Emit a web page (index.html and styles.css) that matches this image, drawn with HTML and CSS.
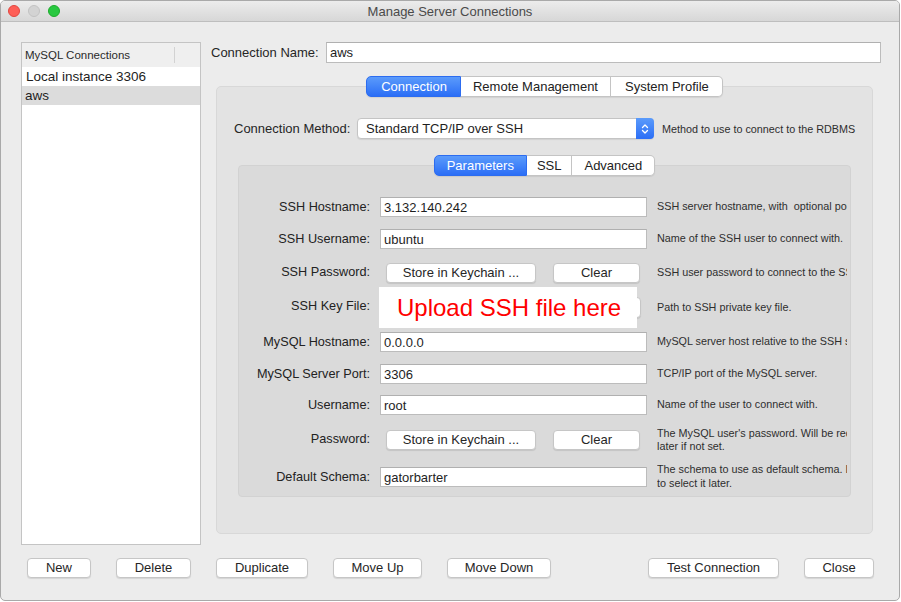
FILE: index.html
```html
<!DOCTYPE html>
<html>
<head>
<meta charset="utf-8">
<title>Manage Server Connections</title>
<link rel="stylesheet" href="styles.css">
</head>
<body>
<div class="window">
  <div class="titlebar">
    <div class="lights">
      <span class="light red"></span><span class="light gray"></span><span class="light green"></span>
    </div>
    <div class="title">Manage Server Connections</div>
    <div></div>
  </div>
  <div class="content">
    <div class="main">
      <div class="list">
        <div class="list-header"><span class="list-header-text">MySQL Connections</span><span class="hdr-sep"></span></div>
        <div class="list-row">Local instance 3306</div>
        <div class="list-row selected">aws</div>
      </div>
      <div class="editor">
        <div class="name-row">
          <span class="name-label">Connection Name:</span>
          <div class="input name-input">aws</div>
        </div>
        <div class="tabview outer">
          <div class="tabs">
            <span class="tab active">Connection</span><span class="tab">Remote Management</span><span class="tab last-wide">System Profile</span>
          </div>
          <div class="panel">
            <div class="method-row">
              <span class="method-label">Connection Method:</span>
              <div class="select">
                <span class="select-text">Standard TCP/IP over SSH</span>
                <span class="select-arrow"><svg width="8" height="12" viewBox="0 0 8 12"><path d="M1.5 4.5 L4 2 L6.5 4.5 M1.5 7.5 L4 10 L6.5 7.5" fill="none" stroke="#fff" stroke-width="1.3" stroke-linecap="round" stroke-linejoin="round"/></svg></span>
              </div>
              <span class="method-desc">Method to use to connect to the RDBMS</span>
            </div>
            <div class="tabview inner">
              <div class="tabs">
                <span class="tab active">Parameters</span><span class="tab narrow">SSL</span><span class="tab">Advanced</span>
              </div>
              <div class="inner-panel">
                <div class="form">
                  <span class="flabel">SSH Hostname:</span>
                  <div class="input field-input">3.132.140.242</div>
                  <span class="desc">SSH server hostname, with &nbsp;optional port (if not 22)</span>

                  <span class="flabel">SSH Username:</span>
                  <div class="input field-input">ubuntu</div>
                  <span class="desc">Name of the SSH user to connect with.</span>

                  <span class="flabel btn-row-label">SSH Password:</span>
                  <div class="field-buttons"><button class="btn keychain">Store in Keychain ...</button><button class="btn clear">Clear</button></div>
                  <span class="desc">SSH user password to connect to the SSH tunnel.</span>

                  <span class="flabel btn-row-label">SSH Key File:</span>
                  <div class="keyfile">
                    <button class="btn browse"></button>
                    <div class="upload-note">Upload SSH file here</div>
                  </div>
                  <span class="desc">Path to SSH private key file.</span>

                  <span class="flabel">MySQL Hostname:</span>
                  <div class="input field-input">0.0.0.0</div>
                  <span class="desc">MySQL server host relative to the SSH server.</span>

                  <span class="flabel">MySQL Server Port:</span>
                  <div class="input field-input">3306</div>
                  <span class="desc">TCP/IP port of the MySQL server.</span>

                  <span class="flabel">Username:</span>
                  <div class="input field-input">root</div>
                  <span class="desc">Name of the user to connect with.</span>

                  <span class="flabel btn-row-label">Password:</span>
                  <div class="field-buttons"><button class="btn keychain">Store in Keychain ...</button><button class="btn clear">Clear</button></div>
                  <span class="desc">The MySQL user's password. Will be requested<br>later if not set.</span>

                  <span class="flabel">Default Schema:</span>
                  <div class="input field-input">gatorbarter</div>
                  <span class="desc">The schema to use as default schema. Leave blank<br>to select it later.</span>
                </div>
              </div>
            </div>
          </div>
        </div>
      </div>
    </div>
    <div class="button-row">
      <button class="btn b-new">New</button>
      <button class="btn b-delete">Delete</button>
      <button class="btn b-duplicate">Duplicate</button>
      <button class="btn b-up">Move Up</button>
      <button class="btn b-down">Move Down</button>
      <button class="btn b-test">Test Connection</button>
      <button class="btn b-close">Close</button>
    </div>
  </div>
</div>
</body>
</html>
```

FILE: styles.css
```css
html, body {
  margin: 0;
  padding: 0;
  background: #ffffff;
}
body {
  font-family: "Liberation Sans", Arial, sans-serif;
  font-size: 13px;
  color: #262626;
}
.window {
  width: 900px;
  height: 601px;
  box-sizing: border-box;
  border: 1px solid #a9a9a9;
  border-radius: 5px;
  background: #ececec;
  overflow: hidden;
  display: flex;
  flex-direction: column;
}
.titlebar {
  height: 20px;
  flex: 0 0 20px;
  border-bottom: 1px solid #bebebe;
  background: linear-gradient(#ececec, #d7d7d7);
  display: grid;
  grid-template-columns: 1fr auto 1fr;
  align-items: center;
}
.lights {
  display: flex;
  gap: 8px;
  padding-left: 7px;
}
.light {
  width: 12px;
  height: 12px;
  box-sizing: border-box;
  border-radius: 50%;
  display: block;
}
.light.red { background: #fe5f57; border: 1px solid #e1463f; }
.light.gray { background: #d3d3d3; border: 1px solid #c2c2c2; }
.light.green { background: #28c840; border: 1px solid #1dab2b; }
.title {
  color: #4a4a4a;
  font-size: 13px;
}
.content {
  flex: 1;
  padding: 20px 0 0 20px;
  display: flex;
  flex-direction: column;
}
.main {
  display: flex;
}
.list {
  width: 180px;
  height: 503px;
  box-sizing: border-box;
  border: 1px solid #c4c4c4;
  background: #fff;
}
.list-header {
  height: 24px;
  display: flex;
  align-items: center;
  background: #efefef;
  padding-left: 3px;
}
.list-header-text {
  width: 149px;
  font-size: 11.5px;
  color: #2a2a2a;
}
.hdr-sep {
  width: 1px;
  height: 16px;
  background: #d2d2d2;
}
.list-row {
  height: 19px;
  line-height: 19px;
  padding-left: 4px;
  font-size: 13.5px;
  color: #1e1e1e;
}
.list-row.selected {
  background: #dcdcdc;
  padding-left: 3px;
}
.editor {
  margin-left: 10px;
  width: 670px;
}
.name-row {
  display: flex;
  align-items: center;
  height: 21px;
}
.name-label {
  width: 115px;
}
.input {
  box-sizing: border-box;
  height: 20px;
  border: 1px solid #bcbcbc;
  border-top-color: #b0b0b0;
  background: #fff;
  padding: 0 3px;
  line-height: 19px;
  color: #1e1e1e;
  white-space: nowrap;
}
.name-input {
  width: 555px;
  height: 21px;
}
.tabview {
  display: flex;
  flex-direction: column;
  align-items: center;
}
.tabview.outer {
  margin: 13px 0 0 5px;
  width: 657px;
}
.tabs {
  display: flex;
  height: 21px;
  margin-bottom: -11px;
  position: relative;
  z-index: 1;
  border-radius: 5px;
  box-shadow: 0 1px 1px rgba(0, 0, 0, 0.08);
}
.tab {
  box-sizing: border-box;
  height: 21px;
  line-height: 19px;
  padding: 0 11px;
  background: #fff;
  border: 1px solid #c4c4c4;
  border-left: none;
  color: #222;
}
.tab:first-child {
  border-left: 1px solid #c4c4c4;
  border-radius: 5px 0 0 5px;
}
.tab:last-child {
  border-radius: 0 5px 5px 0;
}
.tab.active {
  background: linear-gradient(#5b9bfb, #2b6ef6);
  border-color: #2c6cf0;
  color: #fff;
}
.outer .tab { padding: 0 12px; }
.outer .tab.active { padding: 0 13px 0 14px; }
.outer .tab.last-wide { padding: 0 13px 0 14px; }
.panel {
  width: 657px;
  height: 448px;
  box-sizing: border-box;
  border: 1px solid #d8d8d8;
  border-radius: 5px;
  background: #e3e3e3;
}
.method-row {
  margin: 31px 0 0 17px;
  display: flex;
  align-items: center;
  height: 21px;
}
.method-label {
  width: 123px;
}
.select {
  width: 297px;
  height: 21px;
  box-sizing: border-box;
  border: 1px solid #c4c4c4;
  border-radius: 4px;
  background: #fff;
  display: flex;
  align-items: center;
  padding-left: 8px;
  box-shadow: 0 1px 1px rgba(0, 0, 0, 0.08);
}
.select-text {
  color: #1e1e1e;
}
.select-arrow {
  margin: -1px -1px -1px auto;
  align-self: stretch;
  width: 18px;
  border-radius: 0 4px 4px 0;
  background: linear-gradient(#5b9bfb, #2b6ef6);
  display: flex;
  align-items: center;
  justify-content: center;
}
.method-desc {
  margin-left: 8px;
  font-size: 10.8px;
  white-space: nowrap;
  color: #2e2e2e;
}
.tabview.inner {
  margin: 16px 0 0 21px;
  width: 613px;
}
.inner .tab { padding: 0 12px; }
.inner .tab.active { padding: 0 12px 0 12px; }
.inner .tab.narrow { padding: 0 10px; }
.inner-panel {
  width: 613px;
  height: 332px;
  box-sizing: border-box;
  border: 1px solid #d2d2d2;
  border-radius: 4px;
  background: #dadada;
  padding-top: 25px;
  overflow: hidden;
}
.form {
  display: grid;
  grid-template-columns: 131px 267px 190px;
  grid-template-rows: 32px 32px 36px 33px 35px 29px 34px 36px 37px;
  column-gap: 10px;
  align-items: center;
}
.flabel {
  text-align: right;
  white-space: nowrap;
  color: #222;
  font-size: 12.7px;
}
.btn-row-label {
  margin-top: -3px;
}
.field-input {
  width: 267px;
}
.desc {
  font-size: 10.8px;
  line-height: 13.5px;
  white-space: nowrap;
  overflow: hidden;
  color: #2e2e2e;
}
.field-buttons {
  display: flex;
  gap: 17px;
  padding-left: 6px;
}
.btn {
  box-sizing: border-box;
  height: 20px;
  margin: 0;
  padding: 0;
  border: 1px solid #c6c6c6;
  border-radius: 4px;
  background: #fff;
  box-shadow: 0 1px 1px rgba(0, 0, 0, 0.1);
  font-family: "Liberation Sans", Arial, sans-serif;
  font-size: 13px;
  line-height: 18px;
  color: #262626;
  text-align: center;
}
.keychain { width: 150px; }
.clear { width: 87px; }
.keyfile {
  position: relative;
  align-self: stretch;
  display: flex;
  align-items: center;
  padding-left: 173px;
}
.browse {
  width: 88px;
  height: 21px;
}
.upload-note {
  position: absolute;
  left: -1px;
  top: -4px;
  width: 258px;
  height: 41px;
  box-sizing: border-box;
  background: #fff;
  padding-left: 18px;
  line-height: 41px;
  font-size: 24px;
  color: #ff0000;
  white-space: nowrap;
}
.button-row {
  display: flex;
  gap: 25px;
  margin-top: 13px;
  padding-left: 6px;
  padding-right: 25px;
}
.b-new { width: 64px; }
.b-delete { width: 75px; }
.b-duplicate { width: 92px; }
.b-up { width: 89px; }
.b-down { width: 104px; }
.b-test { width: 131px; margin-left: auto; }
.b-close { width: 70px; }
```
